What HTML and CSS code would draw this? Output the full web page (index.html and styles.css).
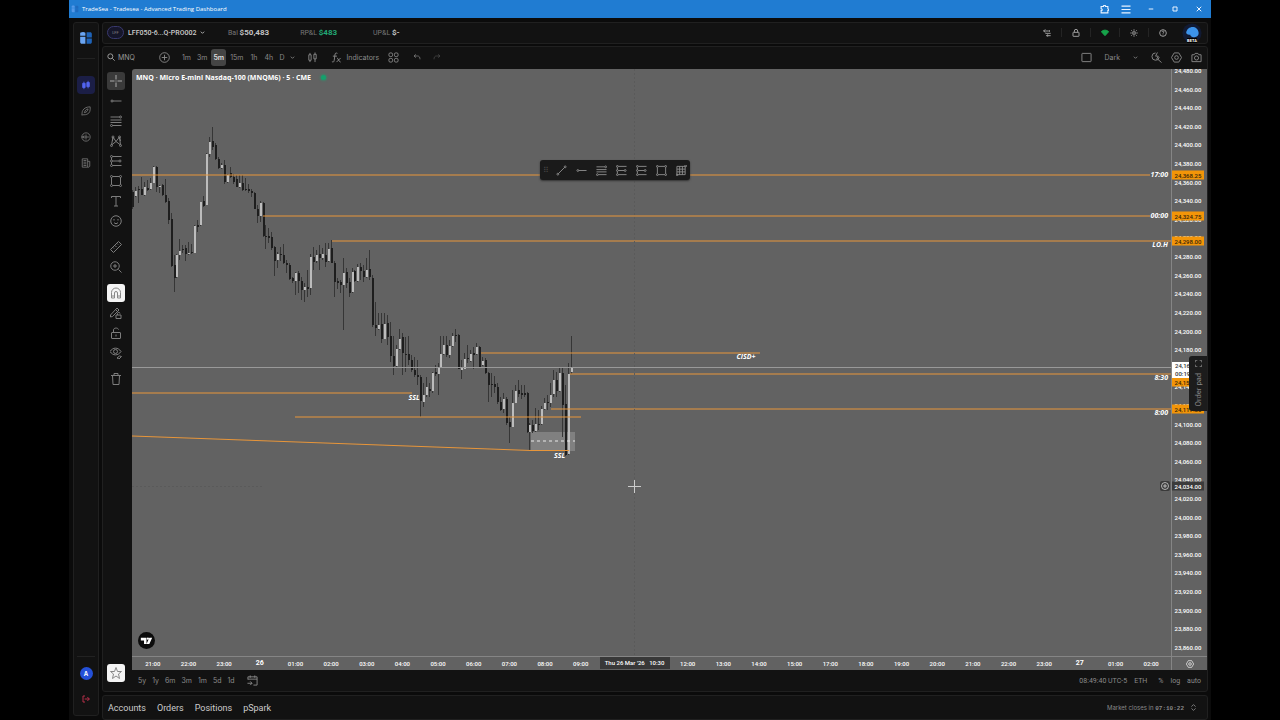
FILE: index.html
```html
<!DOCTYPE html>
<html lang="en">
<head>
<meta charset="utf-8">
<title>TradeSea - Tradesea - Advanced Trading Dashboard</title>
<link rel="stylesheet" href="styles.css">
</head>
<body>
<svg class="defs" aria-hidden="true">
  <defs>
    <symbol id="chev" viewBox="0 0 24 24"><path d="M4 8l8 8 8-8"/></symbol>
    <symbol id="search" viewBox="0 0 24 24"><circle cx="10" cy="10" r="7.5"/><path d="M16 16l7 7"/></symbol>
    <symbol id="plusc" viewBox="0 0 24 24"><circle cx="12" cy="12" r="10.5"/><path d="M12 6v12M6 12h12"/></symbol>
    <symbol id="candles" viewBox="0 0 24 24"><path d="M4 6h5v12H4zM6.500 2v4M6.500 18v4M15 5h5v10h-5zM17.500 1v4M17.500 15v7"/></symbol>
    <symbol id="fx" viewBox="0 0 24 24"><path d="M14 3c-4-2-5 0-5.500 4L7 18c-.5 4-2 4.500-5 3M4 9h9M13 13c3 0 4 9 8 9M21 13l-9 9"/></symbol>
    <symbol id="grid4" viewBox="0 0 24 24"><rect x="2" y="2" width="8" height="8" rx="3"/><rect x="14" y="2" width="8" height="8" rx="3"/><rect x="2" y="14" width="8" height="8" rx="3"/><rect x="14" y="14" width="8" height="8" rx="3"/></symbol>
    <symbol id="undo" viewBox="0 0 24 24"><path d="M9 4L3 9l6 5M3 9h11c5 0 7 4 7 10"/></symbol>
    <symbol id="redo" viewBox="0 0 24 24"><path d="M15 4l6 5-6 5M21 9H10c-5 0-7 4-7 10"/></symbol>
    <symbol id="square" viewBox="0 0 24 24"><rect x="2" y="3" width="20" height="18" rx="1"/></symbol>
    <symbol id="quick" viewBox="0 0 24 24"><path d="M10 2a8 8 0 1 0 8 9M15 16l8 7M14 1l-4 8h6l-4 7"/></symbol>
    <symbol id="hex" viewBox="0 0 24 24"><path d="M7 2h10l6 10-6 10H7L1 12z"/><circle cx="12" cy="12" r="4"/></symbol>
    <symbol id="camera" viewBox="0 0 24 24"><path d="M2 6h5l2-3h6l2 3h5v15H2z"/><circle cx="12" cy="13" r="4.500"/></symbol>
    <symbol id="sliders" viewBox="0 0 24 24"><path d="M1 6h16M7 1L2 6l5 4M7 13h16M9 20h14M14 16v7M19 3v6"/></symbol>
    <symbol id="lock" viewBox="0 0 24 24"><rect x="3" y="10" width="18" height="12" rx="1"/><path d="M7 10V6a5 5 0 0 1 10 0v4"/></symbol>
    <symbol id="wifi" viewBox="0 0 24 24"><path class="solid" d="M1 8c6-6 16-6 22 0L12 20z"/></symbol>
    <symbol id="sun" viewBox="0 0 24 24"><circle cx="12" cy="12" r="4"/><path d="M12 1v4M12 19v4M1 12h4M19 12h4M4 4l3 3M17 17l3 3M4 20l3-3M17 7l3-3"/></symbol>
    <symbol id="help" viewBox="0 0 24 24"><circle cx="12" cy="12" r="10"/><path d="M9 9c0-4 7-4 6 0-.5 2-3 2-3 5M12 17v2"/></symbol>
    <symbol id="puzzle" viewBox="0 0 24 24"><path d="M3 4h6c0-4 6-4 6 0h6v6c3 0 3 5 0 5v6H3v-6c4 0 4-5 0-5z"/></symbol>
    <symbol id="menu" viewBox="0 0 24 24"><path d="M0 3h24M0 12h24M0 21h24"/></symbol>
    <symbol id="min" viewBox="0 0 24 24"><path d="M3 12h18"/></symbol>
    <symbol id="max" viewBox="0 0 24 24"><path d="M4 4h16v16H4z"/></symbol>
    <symbol id="close" viewBox="0 0 24 24"><path d="M3 3l18 18M21 3L3 21"/></symbol>
    <symbol id="logo" viewBox="0 0 24 24"><path fill="#6aa5f3" d="M2 3c4-2 6-2 9 0v5H2zM2 10h9v12H5c-2 0-3-1-3-3z"/><path fill="#1e63b8" d="M13 2h6c2 0 3 1 3 3v6h-9zM13 13h9v6c0 2-1 3-3 3h-6z"/></symbol>
    <symbol id="barsf" viewBox="0 0 24 24"><path class="solid" d="M4 8h6v10H4zM14 6h6v10h-6z"/><path d="M7 4v18M17 2v18"/></symbol>
    <symbol id="leaf" viewBox="0 0 24 24"><path d="M22 2c1 8-1 16-8 18-5 2-9 0-12 2 1-4 0-7 2-11C7 5 14 2 22 2zM8 16c2-6 4-8 9-9-1 5-3 8-9 9z"/></symbol>
    <symbol id="target" viewBox="0 0 24 24"><circle cx="12" cy="12" r="10"/><path d="M1 12h18M12 6v12M8 9l-4 3 4 3"/></symbol>
    <symbol id="news" viewBox="0 0 24 24"><path d="M3 2h13v20H3zM16 8h5v12l-2 2h-3M6 6h7M6 10h7M6 14h7M6 18h7"/></symbol>
    <symbol id="exit" viewBox="0 0 24 24"><path d="M9 3H3v18h6M8 12h14M16 6l6 6-6 6"/></symbol>
    <symbol id="cross" viewBox="0 0 24 24"><path d="M12 0v9M12 15v9M0 12h9M15 12h9M11 12h2"/></symbol>
    <symbol id="hray" viewBox="0 0 24 24"><circle cx="4" cy="12" r="2"/><path d="M6 12h17"/></symbol>
    <symbol id="fib" viewBox="0 0 24 24"><path d="M1 4h18M1 10h22M1 15h22M5 21h18"/><circle cx="21" cy="4" r="2"/><circle cx="3" cy="21" r="2"/></symbol>
    <symbol id="pattern" viewBox="0 0 24 24"><path d="M3 20L6 4l6 9 7-9 2 16-9-7-9 7M6 4l-1 8M19 4l2 8"/><circle cx="3" cy="21" r="2"/><circle cx="6" cy="4" r="2"/><circle cx="19" cy="4" r="2"/><circle cx="21" cy="21" r="2"/></symbol>
    <symbol id="pos" viewBox="0 0 24 24"><path d="M5 3h18M5 12h13M5 21h18M3 5v5M3 14v5"/><circle cx="3" cy="3" r="2"/><circle cx="3" cy="12" r="2"/><circle cx="20" cy="12" r="2"/><circle cx="3" cy="21" r="2"/></symbol>
    <symbol id="rectn" viewBox="0 0 24 24"><path d="M5 3h14M5 21h14M3 5v14M21 5v14"/><circle cx="3" cy="3" r="2"/><circle cx="21" cy="3" r="2"/><circle cx="3" cy="21" r="2"/><circle cx="21" cy="21" r="2"/></symbol>
    <symbol id="text" viewBox="0 0 24 24"><path d="M3 6V3h18v3M12 3v19M8 22h8"/></symbol>
    <symbol id="smile" viewBox="0 0 24 24"><circle cx="12" cy="12" r="10.500"/><path d="M8 8v3M16 8v3M8 15c2 3 6 3 8 0"/></symbol>
    <symbol id="ruler" viewBox="0 0 24 24"><path d="M1 17L17 1l6 6L7 23zM6 13l2 2M10 9l3 3M14 5l2 2"/></symbol>
    <symbol id="zoomin" viewBox="0 0 24 24"><circle cx="10" cy="10" r="8.500"/><path d="M17 17l6 6M10 6v8M6 10h8"/></symbol>
    <symbol id="magnet" viewBox="0 0 24 24"><path d="M3 22V11a9 9 0 0 1 18 0v11h-6V12a3 3 0 0 0-6 0v10zM3 18h6M15 18h6"/></symbol>
    <symbol id="penlock" viewBox="0 0 24 24"><path d="M1 16L14 2l4 4L5 19l-4 1zM11 5l4 4M12 16h10v7H12zM15 16v-3c0-3 5-3 5 0"/></symbol>
    <symbol id="unlock" viewBox="0 0 24 24"><rect x="3" y="11" width="18" height="12" rx="1"/><path d="M7 11V6c0-5 9-5 10-1M12 15v4"/></symbol>
    <symbol id="eye" viewBox="0 0 24 24"><path d="M0 9c6-9 16-9 22 0-6 9-16 9-22 0zM14 22l5-4 4 1-5 5z"/><circle cx="11" cy="9" r="4"/></symbol>
    <symbol id="trash" viewBox="0 0 24 24"><path d="M2 5h20M5 5l1 18h12l1-18M8 5V1h8v4"/></symbol>
    <symbol id="star" viewBox="0 0 24 24"><path d="M12 1l3 8h8l-6 5 2 9-7-5-7 5 2-9-6-5h8z"/></symbol>
    <symbol id="trend" viewBox="0 0 24 24"><path d="M5 19L19 5"/><circle cx="4" cy="20" r="2"/><circle cx="20" cy="4" r="2"/></symbol>
    <symbol id="gridn" viewBox="0 0 24 24"><path d="M2 3h18v18H2zM8 3v18M14 3v18M2 9h18M2 15h18"/><circle cx="21" cy="2" r="2"/><circle cx="2" cy="22" r="2"/></symbol>
    <symbol id="goto" viewBox="0 0 24 24"><path d="M2 10V4h20v18h-8M2 9h20M7 1v5M17 1v5M1 18h10M7 14l4 4-4 4"/></symbol>
    <symbol id="updown" viewBox="0 0 24 24"><path d="M5 9l7-7 7 7M5 15l7 7 7-7"/></symbol>
    <symbol id="expand" viewBox="0 0 24 24"><path d="M1 8V1h7M16 1h7v7M23 16v7h-7M8 23H1v-7"/></symbol>
  </defs>
</svg>

<div class="app">
  <header class="titlebar">
    <svg class="icon logo-sm"><use href="#logo"/></svg>
    <span class="titlebar-text">TradeSea - Tradesea - Advanced Trading Dashboard</span>
    <button class="win" aria-label="Extensions"><svg class="icon bold"><use href="#puzzle"/></svg></button>
    <button class="win menu" aria-label="Menu"><svg class="icon bold"><use href="#menu"/></svg></button>
    <button class="win small" aria-label="Minimize"><svg class="icon bold"><use href="#min"/></svg></button>
    <button class="win small" aria-label="Maximize"><svg class="icon bold"><use href="#max"/></svg></button>
    <button class="win small" aria-label="Close"><svg class="icon bold"><use href="#close"/></svg></button>
  </header>

  <div class="body">
    <nav class="sidebar panel" aria-label="Main">
      <svg class="icon logo"><use href="#logo"/></svg>
      <hr>
      <button class="side active" aria-label="Chart"><svg class="icon"><use href="#barsf"/></svg></button>
      <button class="side" aria-label="Explore"><svg class="icon"><use href="#leaf"/></svg></button>
      <button class="side" aria-label="Replay"><svg class="icon"><use href="#target"/></svg></button>
      <button class="side" aria-label="News"><svg class="icon"><use href="#news"/></svg></button>
      <hr class="push">
      <button class="user">A</button>
      <button class="side exit" aria-label="Log out"><svg class="icon"><use href="#exit"/></svg></button>
    </nav>

    <main class="main">
      <section class="account panel">
        <button class="acct"><span class="badge">LFF</span>LFF050-6...Q-PRO002<svg class="icon tiny"><use href="#chev"/></svg></button>
        <span class="stat bal">Bal <b>$50,483</b></span>
        <span class="stat rpl">RP&amp;L <b class="green">$483</b></span>
        <span class="stat upl">UP&amp;L <b>$-</b></span>
        <div class="status">
          <button aria-label="Settings"><svg class="icon"><use href="#sliders"/></svg></button>
          <button aria-label="Lock"><svg class="icon"><use href="#lock"/></svg></button>
          <button class="online" aria-label="Connection"><svg class="icon"><use href="#wifi"/></svg></button>
          <button aria-label="Theme"><svg class="icon"><use href="#sun"/></svg></button>
          <button aria-label="Help"><svg class="icon"><use href="#help"/></svg></button>
        </div>
        <div class="avatar"><svg viewBox="0 0 24 24"><circle cx="12" cy="12" r="11.500" fill="#111a33"/><path d="M5 12C6 3 19 2 20 12c0 3-2 5-5 5-4 0-5-2-5-3-2 0-4 0-5-2z" fill="#3c93ea"/></svg><span>BETA</span></div>
      </section>

      <section class="workspace panel">
        <div class="toolbar">
          <button class="symbol"><svg class="icon"><use href="#search"/></svg>MNQ</button>
          <button class="add" aria-label="Compare"><svg class="icon"><use href="#plusc"/></svg></button>
          <div class="intervals">
            <button>1m</button><button>3m</button><button class="on">5m</button><button>15m</button><button>1h</button><button>4h</button><button class="slim">D</button>
            <button class="slim" aria-label="More intervals"><svg class="icon tiny"><use href="#chev"/></svg></button>
          </div>
          <button class="style" aria-label="Chart style"><svg class="icon"><use href="#candles"/></svg></button>
          <button class="indicators"><svg class="icon"><use href="#fx"/></svg>Indicators</button>
          <button class="layouts" aria-label="Templates"><svg class="icon"><use href="#grid4"/></svg></button>
          <button class="undo" aria-label="Undo"><svg class="icon small"><use href="#undo"/></svg></button>
          <button class="redo" aria-label="Redo"><svg class="icon small"><use href="#redo"/></svg></button>
          <div class="toolbar-right">
            <button aria-label="Layout"><svg class="icon"><use href="#square"/></svg></button>
            <button class="theme">Dark<svg class="icon tiny"><use href="#chev"/></svg></button>
            <button aria-label="Quick search"><svg class="icon"><use href="#quick"/></svg></button>
            <button aria-label="Chart settings"><svg class="icon"><use href="#hex"/></svg></button>
            <button aria-label="Snapshot"><svg class="icon"><use href="#camera"/></svg></button>
          </div>
        </div>

        <div class="middle">
          <div class="tools">
            <button class="sel" aria-label="Cursor"><svg class="icon"><use href="#cross"/></svg></button>
            <button aria-label="Lines"><svg class="icon"><use href="#hray"/></svg></button>
            <button aria-label="Fibonacci"><svg class="icon"><use href="#fib"/></svg></button>
            <button aria-label="Patterns"><svg class="icon"><use href="#pattern"/></svg></button>
            <button aria-label="Positions"><svg class="icon"><use href="#pos"/></svg></button>
            <button aria-label="Shapes"><svg class="icon"><use href="#rectn"/></svg></button>
            <button aria-label="Text"><svg class="icon"><use href="#text"/></svg></button>
            <button aria-label="Icons"><svg class="icon"><use href="#smile"/></svg></button>
            <button class="group" aria-label="Measure"><svg class="icon"><use href="#ruler"/></svg></button>
            <button aria-label="Zoom in"><svg class="icon"><use href="#zoomin"/></svg></button>
            <button class="group white" aria-label="Magnet"><svg class="icon"><use href="#magnet"/></svg></button>
            <button aria-label="Keep drawing"><svg class="icon"><use href="#penlock"/></svg></button>
            <button aria-label="Lock drawings"><svg class="icon"><use href="#unlock"/></svg></button>
            <button aria-label="Hide drawings"><svg class="icon"><use href="#eye"/></svg></button>
            <button class="group" aria-label="Remove"><svg class="icon"><use href="#trash"/></svg></button>
            <button class="white bottom" aria-label="Favorites"><svg class="icon"><use href="#star"/></svg></button>
          </div>

          <div class="chart-col">
            <div class="chart">
              <div class="plot">
                <svg class="drawing" viewBox="0 0 1039 587" preserveAspectRatio="none">
                  <rect x="399" y="363" width="44" height="19" fill="#808080"/>
                  <g id="candle-layer"></g>
                  <g class="levels">
                    <path d="M0 106H1018"/>
                    <path d="M131 147H1018"/>
                    <path d="M200 172H1039"/>
                    <path d="M349 284H628"/>
                    <path d="M438 305H1039"/>
                    <path d="M419 340H1039"/>
                    <path d="M0 324H280"/>
                    <path d="M163 348H449"/>
                    <path d="M0 367L399 381.500H437"/>
                  </g>
                  <path class="dash" d="M399 372h44"/>
                  <path class="last" d="M0 298.500h1039"/>
                  <path class="guide" d="M502.500 0v587M0 417.500h130"/>
                  <path class="cursor" d="M496 417.500h13M502.500 411v13"/>
                </svg>
                <h1 class="legend">MNQ · Micro E-mini Nasdaq-100 (MNQM6) · 5 · CME <i></i></h1>
                <span class="tag t1">17:00</span><span class="tag t2">00:00</span><span class="tag t3">LO.H</span>
                <span class="tag t4">CISD+</span><span class="tag t5">8:30</span><span class="tag t6">8:00</span>
                <span class="tag t7">SSL</span><span class="tag t8">SSL</span>
                <div class="favbar">
                  <span class="grip">⠿</span>
                  <button aria-label="Trend line"><svg class="icon"><use href="#trend"/></svg></button>
                  <button aria-label="Horizontal ray"><svg class="icon"><use href="#hray"/></svg></button>
                  <button aria-label="Fib retracement"><svg class="icon"><use href="#fib"/></svg></button>
                  <button aria-label="Long position"><svg class="icon"><use href="#pos"/></svg></button>
                  <button aria-label="Short position"><svg class="icon"><use href="#pos"/></svg></button>
                  <button aria-label="Rectangle"><svg class="icon"><use href="#rectn"/></svg></button>
                  <button aria-label="Grid"><svg class="icon"><use href="#gridn"/></svg></button>
                </div>
                <svg class="tv" viewBox="0 0 24 24"><circle cx="12" cy="12" r="12" fill="#0c0c0c"/><path fill="#fff" d="M4 8h8v9H8.500v-5H4zM16 8h4l-4 9h-4z"/><circle cx="14" cy="9.500" r="1.600" fill="#fff"/></svg>
                <button class="addline" aria-label="Add alert"><svg class="icon"><use href="#plusc"/></svg></button>
              </div>
              <div class="price-axis">
                <ol id="prices"></ol>
                <span class="price p1">24,368.25</span>
                <span class="price p2">24,324.75</span>
                <span class="price p3">24,298.00</span>
                <span class="price p5">24,154.75</span>
                <span class="price p6">24,117.00</span>
                <span class="price now">24,161.75<br>00:19</span>
                <span class="price hover">24,034.00</span>
                <button class="orderpad"><svg class="icon"><use href="#expand"/></svg><span>Order pad</span></button>
              </div>
              <div class="time-axis">
                <ol id="times"></ol>
                <span class="time-hover">Thu 26 Mar '26 &nbsp; 10:30</span>
              </div>
              <div class="corner"><svg class="icon"><use href="#hex"/></svg></div>
            </div>
            <div class="ranges">
              <button>5y</button><button>1y</button><button>6m</button><button>3m</button><button>1m</button><button>5d</button><button>1d</button>
              <button class="goto" aria-label="Go to date"><svg class="icon"><use href="#goto"/></svg></button>
              <div class="ranges-right"><button>08:49:40 UTC-5</button><button>ETH</button><button class="pct">%</button><button>log</button><button>auto</button></div>
            </div>
          </div>
        </div>
      </section>

      <footer class="bottom-panel panel">
        <button>Accounts</button><button>Orders</button><button>Positions</button><button>pSpark</button>
        <span class="market">Market closes in <code>07:10:22</code></span>
        <svg class="icon tiny"><use href="#updown"/></svg>
      </footer>
    </main>
  </div>
</div>
<script src="chart.js"></script>
</body>
</html>
```

FILE: styles.css
```css
* { box-sizing: border-box; }
body { margin: 0; background: #000; font-family: Inter, "Liberation Sans", sans-serif; color: #8b8b8b; }
button { all: unset; box-sizing: border-box; display: flex; align-items: center; justify-content: center; cursor: pointer; flex: none; white-space: nowrap; }
ol { list-style: none; margin: 0; padding: 0; }
.defs { position: absolute; width: 0; height: 0; }
.icon { width: 11px; height: 11px; flex: none; fill: none; stroke: currentColor; stroke-width: 2; overflow: visible; }
.icon.bold { stroke-width: 3; }
.icon.tiny { width: 5px; height: 5px; stroke-width: 4; }
.icon.small { width: 8px; height: 8px; }
.solid { fill: currentColor; }
.panel { background: #121212; border: 1px solid #202020; border-radius: 3px; }

.app { height: 100vh; margin: 0 69px; background: #0b0b0b; display: flex; flex-direction: column; overflow: hidden; }
.titlebar { height: 18px; flex: none; background: #207cd2; color: #fff; display: flex; align-items: center; padding: 0 8px 0 2px; }
.logo-sm { width: 8px; height: 8px; stroke: none; opacity: .7; }
.titlebar-text { font: 500 6px "Open Sans", sans-serif; margin-left: 3px; flex: 1; }
.win { width: 11px; margin-right: 10px; color: #e8f2ff; }
.win .icon { width: 9px; height: 9px; stroke-width: 3; }
.win.menu { margin-right: 16px; }
.win.menu .icon { width: 10px; }
.win.small { width: 8px; margin-right: 16px; }
.win.small .icon { width: 6px; height: 6px; stroke-width: 4; }
.win:last-child { margin-right: 0; }

.body { flex: 1; min-height: 0; display: flex; gap: 3px; padding: 4px 3px 0 4px; }
.sidebar { width: 26px; margin-bottom: 4px; display: flex; flex-direction: column; align-items: center; padding: 8px 0 7px; }
.logo { width: 14px; height: 14px; stroke: none; }
.sidebar hr { width: 18px; border: 0; border-top: 1px solid #222; margin: 13px 0 17px; }
.sidebar .push { margin: auto 0 10px; }
.side { width: 18px; height: 18px; margin-bottom: 8px; border-radius: 4px; color: #777; }
.side .icon { width: 10px; height: 10px; }
.side.active { background: #1b1e46; color: #5365f0; }
.user { width: 13px; height: 13px; border-radius: 50%; background: #2450d8; color: #fff; font-size: 6px; font-weight: 700; margin-bottom: 10px; }
.side.exit { color: #b52e49; margin: 0; }
.side.exit .icon { width: 8px; height: 8px; stroke-width: 3; }

.main { flex: 1; min-width: 0; display: flex; flex-direction: column; }
.account { height: 22px; margin-bottom: 2px; flex: none; display: flex; align-items: center; padding: 0 5px 1px 4px; font: 7px Roboto, sans-serif; }
.acct { gap: 4px; color: #ccc; font-weight: 500; width: 98px; justify-content: flex-start; }
.badge { flex: none; width: 17px; height: 13px; border: 1px solid #39396e; border-radius: 7px; background: #16162a; color: #777; font-size: 4px; display: grid; place-items: center; }
.stat { white-space: nowrap; margin-left: 23px; color: #777; font-size: 7px; }
.stat b { color: #c4c4c4; font-size: 8px; font-weight: 700; }
.stat .green { color: #22a875; }
.stat.rpl { margin-left: 31px; }
.stat.upl { margin-left: 36px; }
.status { margin-left: auto; display: flex; }
.status button { width: 29px; height: 9px; color: #9a9a9a; border-left: 1px solid #242424; }
.status button:first-child { border-left: 0; }
.status .icon { width: 8px; height: 8px; stroke-width: 3; }
.status .online { color: #16a34a; }
.avatar { width: 20px; height: 20px; margin-left: 5px; text-align: center; position: relative; }
.avatar svg { width: 20px; height: 20px; display: block; }
.avatar span { position: absolute; bottom: 0; left: 5px; width: 10px; line-height: 5px; background: #000; color: #fff; font-size: 4px; font-weight: 700; text-align: center; }

.workspace { flex: 1; min-height: 0; display: flex; flex-direction: column; }
.toolbar { height: 22px; flex: none; display: flex; align-items: center; font-size: 7px; padding: 0 5px 2px 4px; }
.symbol { gap: 3px; color: #999; }
.symbol .icon { width: 8px; height: 8px; stroke-width: 3; }
.add { margin-left: 24px; }
.intervals { display: flex; margin-left: 10px; gap: 2px; }
.intervals button { min-width: 13px; height: 17px; padding: 0 2px; border-radius: 3px; }
.intervals .slim { min-width: 9px; }
.intervals .on { background: #444; color: #ddd; font-weight: 600; }
.style { margin-left: 10px; }
.indicators { gap: 4px; margin-left: 13px; }
.layouts { margin-left: 9px; }
.undo { margin-left: 14px; }
.redo { margin-left: 12px; opacity: .5; }
.toolbar-right { margin-left: auto; display: flex; align-items: center; gap: 9px; }
.theme { gap: 13px; margin: 0 4px 0 3px; }

.middle { flex: 1; min-height: 0; display: flex; }
.tools { width: 29px; flex: none; display: flex; flex-direction: column; align-items: center; gap: 2px; padding: 3px 3px 9px 0; }
.tools button { width: 18px; height: 18px; border-radius: 3px; color: #7d7d7d; }
.tools .icon { width: 12px; height: 12px; }
.tools .sel { background: #3a3a3a; color: #aaa; }
.tools .group { margin-top: 6px; }
.tools .white { background: #f4f4f4; color: #888; }
.tools .bottom { margin-top: auto; }
.chart-col { flex: 1; min-width: 0; display: flex; flex-direction: column; }
.chart { flex: 1; min-height: 0; display: grid; grid-template: minmax(0, 1fr) 14px / minmax(0, 1fr) 36px; background: #626262; border-radius: 3px 0 0 0; overflow: hidden; font: 500 6px Roboto, sans-serif; color: #fff; }
.plot { position: relative; overflow: hidden; }
.drawing { position: absolute; inset: 0; width: 100%; height: 100%; }
.levels { fill: none; stroke: #e8963a; stroke-width: 1; }
.dash { stroke: #e8e8e8; stroke-dasharray: 3 3; }
.last { stroke: #999; }
.guide { stroke: #5a5a5a; stroke-dasharray: 2 2; }
.cursor { stroke: #ccc; }
.up { fill: #bcbcbc; }
.down { fill: #1e1e1e; }
.wick { fill: #363636; }
.legend { position: absolute; top: 3px; left: 4px; margin: 0; font: 700 7px/11px "Open Sans", sans-serif; color: #fff; white-space: nowrap; }
.legend i { display: inline-block; width: 5px; height: 5px; border-radius: 50%; background: #15a06c; margin-left: 8px; box-shadow: 0 0 2px 1px #3e8168; }
.tag { position: absolute; font: italic 700 7px/8px "Open Sans", sans-serif; color: #fff; white-space: nowrap; transform: translateY(-50%); right: 3px; }
.t1 { top: 18%; }
.t2 { top: 25%; }
.t3 { top: 30%; }
.t4 { top: 49%; right: 40%; }
.t5 { top: 53%; margin-top: -2px; }
.t6 { top: 59%; margin-top: -2px; }
.t7 { top: 56%; right: auto; left: 27%; margin-left: -4px; }
.t8 { top: 66%; right: auto; left: 41%; margin-left: -4px; }
.favbar { position: absolute; top: 91px; left: 39%; margin-left: 3px; height: 20px; display: flex; align-items: center; gap: 9px; background: #1a1a1a; border-radius: 3px; padding: 0 3px; color: #8d8d8d; box-shadow: 0 1px 2px #333; }
.favbar .grip { width: 4px; color: #444; font-size: 8px; }
.tv { position: absolute; left: 6px; bottom: 7px; width: 17px; height: 17px; }
.addline { position: absolute; right: 1px; top: 71%; transform: translateY(-50%); background: #3a3a3a; padding: 1px; border-radius: 2px; color: #eee; }
.addline .icon { width: 8px; height: 8px; }
.price-axis { position: relative; border-left: 1px solid #858585; }
#prices { position: absolute; top: -3px; bottom: 3px; left: 0; right: 3px; display: flex; flex-direction: column; justify-content: space-between; line-height: 10px; text-align: center; }
#prices li { height: 10px; }
.price { position: absolute; left: 0; right: 3px; text-align: center; line-height: 9px; transform: translateY(-50%); background: #f39508; color: #38250a; overflow: hidden; }
.p1 { top: 18%; }
.p2 { top: 25%; }
.p3 { top: 29%; margin-top: 2px; }
.p5 { top: 53%; margin-top: 2px; }
.p6 { top: 58%; }
.price.now { top: 51%; margin-top: 2px; padding-left: 3px; text-align: left; background: #fff; color: #333; line-height: 8px; }
.price.hover { top: 71%; background: #3b3b3b; color: #fff; }
.orderpad { position: absolute; right: 0; top: 287px; width: 18px; height: 55px; flex-direction: column; gap: 6px; background: #1c1c1c; color: #888; border-radius: 3px 0 0 3px; font: 7px Inter, sans-serif; }
.orderpad .icon { width: 7px; height: 7px; stroke-width: 3; }
.orderpad span { writing-mode: vertical-rl; transform: rotate(180deg); }
.time-axis { position: relative; border-top: 1px solid #858585; }
#times { display: grid; grid-template-columns: repeat(29, minmax(0, 1fr)); padding: 0 2px 0 3px; line-height: 13px; text-align: center; }
#times .day { font-weight: 700; font-size: 7px; }
.time-hover { position: absolute; top: 0; left: 45%; width: 70px; line-height: 12px; text-align: center; background: #383838; }
.corner { border-top: 1px solid #858585; border-left: 1px solid #858585; display: grid; place-items: center; }
.corner .icon { width: 8px; height: 8px; }
.ranges { height: 21px; flex: none; display: flex; align-items: center; gap: 6px; padding: 0 6px 0 6px; font-size: 7px; }
.goto { margin-left: 6px; }
.ranges-right { margin-left: auto; display: flex; gap: 7px; font-family: Roboto, sans-serif; }
.pct { margin-left: 4px; }

.bottom-panel { height: 25px; margin-top: 3px; flex: none; display: flex; align-items: center; gap: 11px; padding: 0 10px 0 5px; color: #ccc; font: 9px Roboto, sans-serif; }
.market { margin-left: auto; font: 6px Inter, sans-serif; color: #888; }
.market code { font: 700 6px "Liberation Mono", monospace; }
.bottom-panel .icon { width: 7px; height: 7px; margin-left: -5px; stroke-width: 3; color: #888; }
```

FILE: chart.js
```js
// Each candle: high, body top, body bottom, low (thirds of a plot unit), then 1 for up or 0 for down.
const overnight = [
[240,245,290,298,0],[232,243,258,262,1],[228,237,239,280,0],[200,236,254,256,0],[215,230,255,258,1],[210,234,240,242,0],[205,218,238,240,1],[168,170,218,220,1],[168,170,230,245,0],[225,228,232,250,1],[222,225,254,258,0],[208,254,275,280,0],[265,272,330,342,0],[308,328,468,470,0],[435,466,504,545,0],[432,436,500,505,1],[388,422,436,450,1],[405,418,421,430,0],[406,415,432,452,0],[395,428,430,435,1],[402,427,429,432,0],[345,347,428,430,1],[330,345,350,365,0],[275,277,346,348,1],[258,274,288,292,0],[130,132,284,286,1],[80,95,132,142,1],[50,94,110,120,0],[100,105,148,150,0],[142,148,174,176,0],[160,166,174,178,1],[150,166,216,222,0],[192,194,216,218,1],[170,190,202,204,0],[192,200,216,222,0],[195,208,230,232,0],[196,218,230,234,1],[195,220,240,242,0],[205,238,240,244,0],[222,238,242,250,0],[238,242,248,260,0],[245,248,296,298,0],[285,296,318,340,0],[274,278,318,335,1],[275,280,378,382,0],[345,377,382,416,0],[355,378,384,400,0],[366,382,414,420,0],[408,412,452,498,0],[425,432,450,475,1],[410,431,435,452,0],[402,434,460,462,0],[450,458,464,490,0],[460,464,508,510,0],[500,505,512,520,0],[485,488,514,556,1],[484,490,514,550,0],[500,514,540,570,0],[520,530,540,575,1],[480,532,536,560,0],[432,440,534,556,1],[410,442,456,480,0],[420,436,454,458,1],[405,432,444,480,0],[415,432,444,450,1],[400,434,456,470,0],[400,416,454,456,1],[390,414,458,460,0]
];
const morning = [
[34,38,96,142,0],[85,94,98,118,0],[90,95,106,130,0],[24,68,106,240,1],[55,66,98,115,0],[85,96,128,142,0],[55,66,126,128,1],[60,62,92,95,0],[42,50,92,96,1],[38,50,64,90,0],[45,62,80,95,0],[25,60,82,84,1],[0,58,82,90,0],[75,84,226,230,0],[155,226,234,258,0],[188,226,236,240,1],[188,222,268,280,0],[190,222,266,268,1],[195,220,262,285,0],[215,258,318,335,0],[258,318,348,375,0],[285,296,348,350,1],[238,266,296,300,1],[250,262,310,375,0],[260,312,316,365,0],[258,312,330,345,0],[315,330,360,366,0],[320,360,376,380,0],[330,374,380,405,0],[375,380,452,500,0],[400,436,456,470,1],[380,412,436,440,1],[400,418,424,440,0],[365,368,422,430,1],[345,366,372,378,0],[340,350,372,436,1],[258,312,350,352,1],[258,284,312,315,1],[258,286,316,320,0],[270,288,316,325,1],[250,258,288,290,1],[238,254,258,275,0],[252,256,356,358,0],[330,354,360,388,1],[310,326,356,358,1],[285,324,326,340,0],[300,312,332,335,1],[290,310,314,358,0],[280,290,312,316,1],[288,292,350,352,0],[320,334,346,348,1],[325,330,370,372,0],[365,370,404,456,0],[370,402,406,440,0],[378,402,412,430,0],[400,412,456,462,0],[440,456,480,482,0],[430,446,478,490,1],[440,446,520,525,0],[500,516,532,578,0],[420,458,530,532,1],[405,424,458,460,1],[390,420,432,440,0],[405,428,434,448,0],[405,430,434,440,0],[425,430,546,548,0],[520,524,546,600,1],[510,524,544,548,0],[475,522,542,545,1],[480,522,526,540,0],[468,476,522,524,1],[445,458,476,480,1],[435,456,460,480,0],[400,434,460,470,1],[360,390,432,440,1],[365,390,424,440,0],[355,370,424,426,1],[355,368,464,560,0],[405,462,614,618,0],[340,372,612,614,1],[258,352,366,372,1]
];

const MORNING_OFFSET = 420;
const PLOT_TOP = 41;
const LAST_X = 439;

const candles = overnight.concat(
  morning.map(([h, t, b, l, up]) => [h + MORNING_OFFSET, t + MORNING_OFFSET, b + MORNING_OFFSET, l + MORNING_OFFSET, up])
);
const toY = v => Math.round(PLOT_TOP + v / 3);
const layer = document.getElementById("candle-layer");

function bar(x, y, width, height, cls) {
  const r = document.createElementNS("http://www.w3.org/2000/svg", "rect");
  r.setAttribute("x", x);
  r.setAttribute("y", y);
  r.setAttribute("width", width);
  r.setAttribute("height", Math.max(1, height));
  r.setAttribute("class", cls);
  layer.appendChild(r);
}

candles.forEach(([high, top, bottom, low, up], i) => {
  const x = Math.round((i * LAST_X) / (candles.length - 1));
  bar(x, toY(high), 1, toY(low) - toY(high), "wick");
  bar(x, toY(top), 2, toY(bottom) - toY(top), up ? "up" : "down");
});

const LAST_PRICE_ROW = 24160; // covered by the last-price tag
const prices = document.getElementById("prices");
for (let p = 24480; p >= 23860; p -= 20) {
  const li = document.createElement("li");
  if (p !== LAST_PRICE_ROW) li.textContent = p.toLocaleString("en-US", { minimumFractionDigits: 2 });
  prices.appendChild(li);
}

// "-" keeps an empty slot under the crosshair time label.
const times = document.getElementById("times");
"21 22 23 d26 01 02 03 04 05 06 07 08 09 - - 12 13 14 15 17 18 19 20 21 22 23 d27 01 02".split(" ").forEach(t => {
  const li = document.createElement("li");
  const isDay = t[0] === "d";
  if (t !== "-") li.textContent = isDay ? t.slice(1) : t + ":00";
  if (isDay) li.className = "day";
  times.appendChild(li);
});
```
